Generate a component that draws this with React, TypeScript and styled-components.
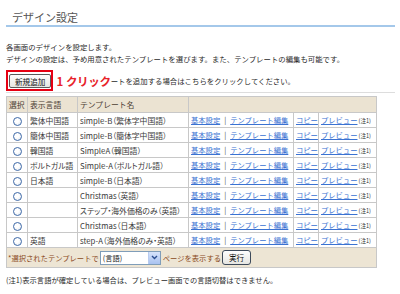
import React from "react";
import styled, { createGlobalStyle } from "styled-components";

const GlobalStyle = createGlobalStyle`
  body {
    margin: 0;
    background: #fff;
    font-family: "Noto Sans CJK JP", "Noto Sans", sans-serif;
    color: #333;
  }
`;

const Page = styled.div({
  width: "400px",
  height: "294px",
  padding: "0 5px 0 6px",
  boxSizing: "border-box",
  overflow: "hidden",
});

const Title = styled.h1({
  margin: 0,
  padding: "10px 0 1px 6px",
  fontSize: "11px",
  lineHeight: "14px",
  fontWeight: "normal",
  color: "#555",
  borderBottom: "2px solid #a4c8ea",
});

const Lead = styled.p({
  margin: "14px 0 0",
  fontSize: "7.4px",
  lineHeight: "12px",
  color: "#2a2a2a",
});

const ActionRow = styled.div({
  marginTop: "5px",
  paddingBottom: "1px",
  display: "flex",
  alignItems: "center",
  borderBottom: "1px solid #ddd",
});

const Highlight = styled.div({
  border: "2px solid #e60012",
  padding: "2px 0 1px 1px",
  display: "flex",
});

const Button = styled.button({
  fontFamily: "inherit",
  fontSize: "7.6px",
  lineHeight: "11px",
  height: "14px",
  padding: "0 5px",
  color: "#111",
  border: "1px solid #5a5a5a",
  borderRadius: "2px",
  background: "linear-gradient(#fdfdfd, #e6e6e2)",
  cursor: "pointer",
});

const Callout = styled.span({
  marginLeft: "3px",
  color: "#e8232a",
  fontWeight: 700,
  fontSize: "11.5px",
  lineHeight: "14px",
  letterSpacing: "-0.3px",
});

const CalloutNum = styled.span({
  marginRight: "3px",
});

const Hint = styled.span({
  fontSize: "7.4px",
  color: "#2a2a2a",
});

const Table = styled.table({
  marginTop: "3px",
  width: "370px",
  borderCollapse: "collapse",
  tableLayout: "fixed",
  borderRight: "1px solid #999",
  borderBottom: "1px solid #999",
});

const HeadCell = styled.th({
  height: "15px",
  padding: "0 0 0 2px",
  textAlign: "left",
  fontWeight: "normal",
  fontSize: "7.8px",
  color: "#4c4034",
  background: "#ebe3d2",
  border: "1px solid #c8c8c8",
  whiteSpace: "nowrap",
});

const Cell = styled.td<{ $center?: boolean; $small?: boolean }>(
  ({ $center, $small }) => ({
    height: "14px",
    padding: $center ? 0 : "0 0 0 2px",
    textAlign: $center ? "center" : "left",
    fontSize: $small ? "7.3px" : "7.8px",
    fontFeatureSettings: $small ? "normal" : '"palt"',
    color: "#3a3a3a",
    border: "1px solid #c8c8c8",
    whiteSpace: "nowrap",
    overflow: "hidden",
  })
);

const Radio = styled.span({
  display: "inline-block",
  width: "7px",
  height: "7px",
  borderRadius: "50%",
  border: "1px solid #3f6aa8",
  background: "radial-gradient(circle at 40% 40%, #fff 30%, #dfe6ef 100%)",
  verticalAlign: "middle",
});

const Link = styled.a({
  color: "#3a72d2",
  textDecoration: "underline",
  cursor: "pointer",
});

const Sep = styled.span({
  margin: "0 4px",
  color: "#444",
});

const Note = styled.span({
  fontSize: "5.6px",
  color: "#333",
  marginLeft: "1px",
});

const FootCell = styled.td({
  height: "19px",
  padding: "0 0 0 1px",
  background: "#ede5d4",
  border: "1px solid #c8c8c8",
  fontSize: "7.3px",
  color: "#8b4a1c",
  whiteSpace: "nowrap",
});

const FootLine = styled.div({
  display: "flex",
  alignItems: "center",
});

const SelectBox = styled.div({
  display: "flex",
  alignItems: "center",
  justifyContent: "space-between",
  width: "61px",
  height: "14px",
  boxSizing: "border-box",
  margin: "0 2px 0 1px",
  border: "1px solid #7f9db9",
  background: "#fff",
  color: "#222",
  fontSize: "7.3px",
  paddingLeft: "2px",
});

const SelectArrow = styled.span({
  display: "flex",
  alignItems: "center",
  justifyContent: "center",
  width: "11px",
  height: "12px",
  background: "linear-gradient(#d6e3fb, #a9c2f0)",
  borderLeft: "1px solid #b8cbef",
});

const SmallButton = styled(Button)({
  marginLeft: "1px",
  height: "15px",
  padding: "0 6px",
  border: "1px solid #3d4a5a",
  borderRadius: "3px",
});

const Footnote = styled.p({
  margin: "6px 0 0",
  fontSize: "7.3px",
  lineHeight: "12px",
  color: "#2a2a2a",
});

const templates = [
  { lang: "繁体中国語", name: "simple-B（繁体字中国語）" },
  { lang: "簡体中国語", name: "simple-B（簡体字中国語）" },
  { lang: "韓国語", name: "SimpleA（韓国語）" },
  { lang: "ポルトガル語", name: "Simple-A（ポルトガル語）" },
  { lang: "日本語", name: "simple-B（日本語）" },
  { lang: "", name: "Christmas（英語）" },
  { lang: "", name: "ステップ・海外価格のみ（英語）" },
  { lang: "", name: "Christmas（日本語）" },
  { lang: "英語", name: "step-A（海外価格のみ・英語）" },
];

export default function App() {
  return (
    <Page>
      <GlobalStyle />
      <Title>デザイン設定</Title>
      <Lead>
        各画面のデザインを設定します。
        <br />
        デザインの設定は、予め用意されたテンプレートを選びます。また、テンプレートの編集も可能です。
      </Lead>
      <ActionRow>
        <Highlight>
          <Button>新規追加</Button>
        </Highlight>
        <Callout>
          <CalloutNum>1</CalloutNum>クリック
        </Callout>
        <Hint>ートを追加する場合はこちらをクリックしてください。</Hint>
      </ActionRow>
      <Table>
        <colgroup>
          <col style={{ width: 21 }} />
          <col style={{ width: 50 }} />
          <col style={{ width: 111 }} />
          <col style={{ width: 105 }} />
          <col style={{ width: 25 }} />
          <col style={{ width: 58 }} />
        </colgroup>
        <thead>
          <tr>
            <HeadCell>選択</HeadCell>
            <HeadCell>表示言語</HeadCell>
            <HeadCell>テンプレート名</HeadCell>
            <HeadCell colSpan={3} />
          </tr>
        </thead>
        <tbody>
          {templates.map((t, i) => (
            <tr key={i}>
              <Cell $center>
                <Radio />
              </Cell>
              <Cell>{t.lang}</Cell>
              <Cell>{t.name}</Cell>
              <Cell $small>
                <Link>基本設定</Link>
                <Sep>|</Sep>
                <Link>テンプレート編集</Link>
              </Cell>
              <Cell $small>
                <Link>コピー</Link>
              </Cell>
              <Cell $small>
                <Link>プレビュー</Link>
                <Note>(注1)</Note>
              </Cell>
            </tr>
          ))}
          <tr>
            <FootCell colSpan={6}>
              <FootLine>
                *選択されたテンプレートで
                <SelectBox>
                  (言語)
                  <SelectArrow>
                    <svg width="7" height="5" viewBox="0 0 7 5">
                      <path d="M1 1 L3.5 3.5 L6 1" fill="none" stroke="#2a4d8f" strokeWidth="1.4" />
                    </svg>
                  </SelectArrow>
                </SelectBox>
                ページを表示する
                <SmallButton>実行</SmallButton>
              </FootLine>
            </FootCell>
          </tr>
        </tbody>
      </Table>
      <Footnote>
        (注1)表示言語が確定している場合は、プレビュー画面での言語切替はできません。
      </Footnote>
    </Page>
  );
}
